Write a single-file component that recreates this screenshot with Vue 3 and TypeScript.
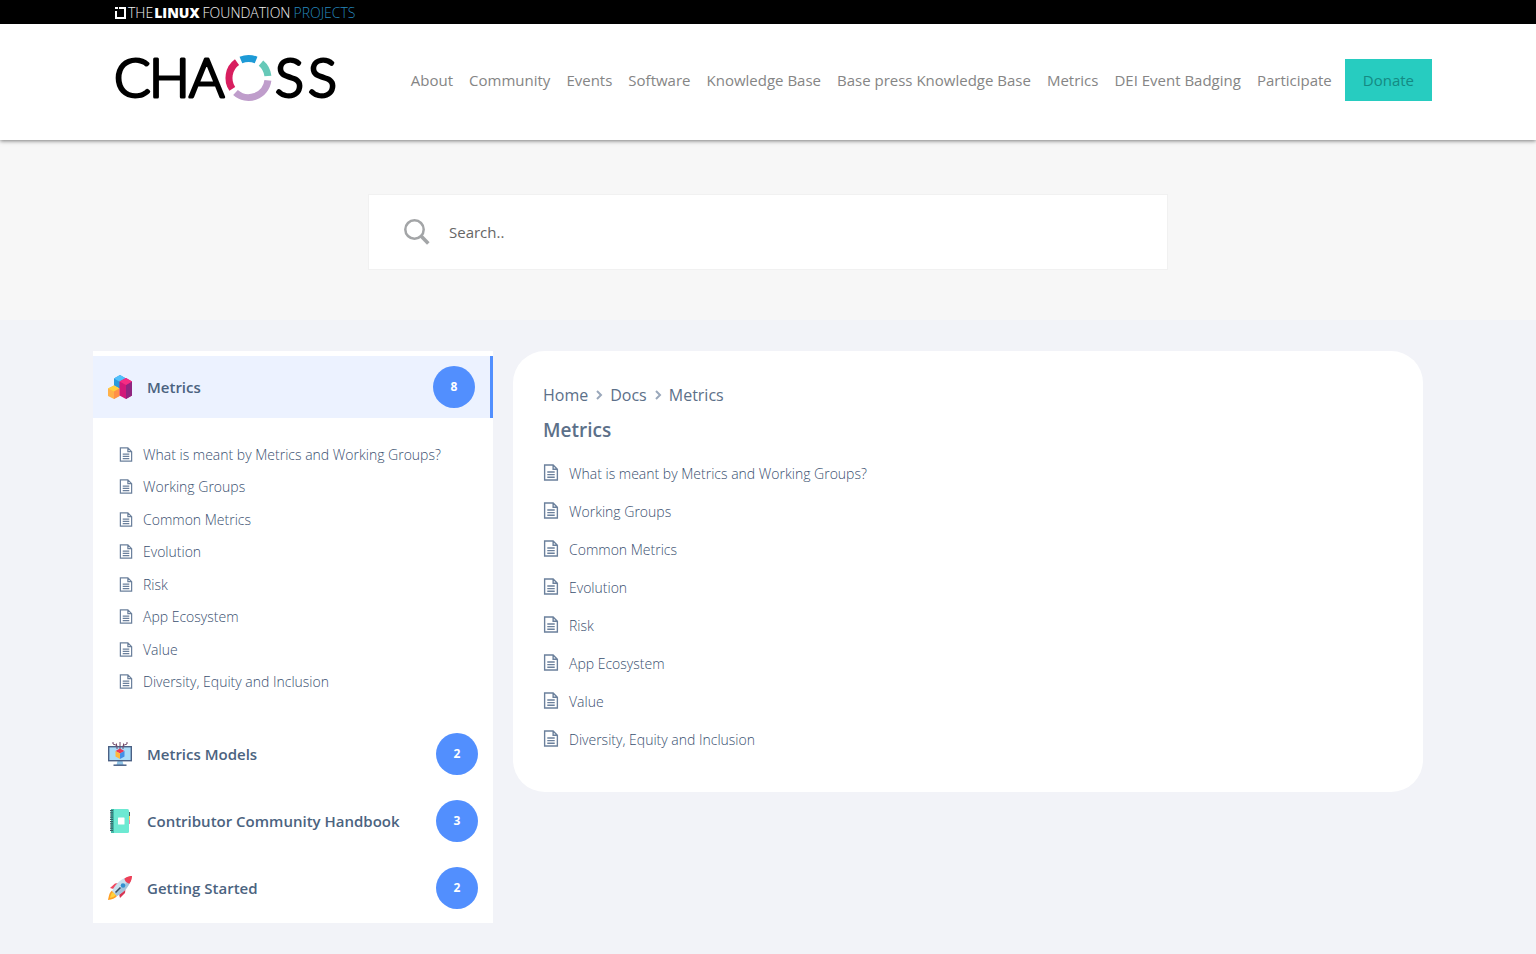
<script setup lang="ts">
interface NavItem { label: string; href: string }
interface Category { title: string; icon: 'blocks' | 'monitor' | 'notebook' | 'rocket'; count: number; open: boolean }

const nav: NavItem[] = [
  'About', 'Community', 'Events', 'Software', 'Knowledge Base',
  'Base press Knowledge Base', 'Metrics', 'DEI Event Badging', 'Participate',
].map((label) => ({ label, href: '#' + label.toLowerCase().replace(/ /g, '-') }))

const docs: string[] = [
  'What is meant by Metrics and Working Groups?', 'Working Groups', 'Common Metrics',
  'Evolution', 'Risk', 'App Ecosystem', 'Value', 'Diversity, Equity and Inclusion',
]

const categories: Category[] = [
  { title: 'Metrics', icon: 'blocks', count: 8, open: true },
  { title: 'Metrics Models', icon: 'monitor', count: 2, open: false },
  { title: 'Contributor Community Handbook', icon: 'notebook', count: 3, open: false },
  { title: 'Getting Started', icon: 'rocket', count: 2, open: false },
]
</script>

<template>
  <div class="page">
    <div class="topbar">
      <a class="lf" href="#linux-foundation">
        <svg class="lf-mark" viewBox="0 0 11 12" aria-hidden="true">
          <path d="M1 4V11H10V1H4" fill="none" stroke="#fff" stroke-width="2" />
          <path d="M0 0h3v2H0z" fill="#fff" />
        </svg>
        <span>THE<b>LINUX</b>FOUNDATION<em>PROJECTS</em></span>
      </a>
    </div>

    <header class="header">
      <a class="brand" href="#home" aria-label="CHAOSS home">
        <svg viewBox="-6 -14 232 76" role="img" aria-label="CHAOSS">
          <g class="brand-letters">
            <text x="-1" y="44">C</text>
            <text x="34" y="44">H</text>
            <text x="74" y="44">A</text>
            <text x="160" y="44">S</text>
            <text x="193" y="44">S</text>
          </g>
          <g fill="none" stroke-width="7">
            <path d="M125.900 7A19.500 19.500 0 0 1 141.100 7" stroke="#1d9ad6" />
            <path d="M146 10.100A19.500 19.500 0 0 1 152.900 23" stroke="#66c9b8" />
            <path d="M152.900 27.400A19.500 19.500 0 0 1 120.500 39.500" stroke="#bf9dcb" />
            <path d="M117.300 35.900A19.500 19.500 0 0 1 122 9.200" stroke="#d81e5f" />
          </g>
        </svg>
      </a>
      <div class="header-right">
        <nav class="nav" aria-label="Main">
          <a v-for="item in nav" :key="item.label" :href="item.href">{{ item.label }}</a>
        </nav>
        <a class="donate" href="#donate">Donate</a>
      </div>
    </header>

    <section class="search-band">
      <form class="search" role="search" @submit.prevent>
        <svg class="search-icon" viewBox="0 0 26 26" aria-hidden="true">
          <circle cx="10.500" cy="10.500" r="9.200" fill="none" stroke="#a3a5a7" stroke-width="2.500" />
          <path d="M17.300 17.300L24.300 24.500" stroke="#a3a5a7" stroke-width="3.600" />
        </svg>
        <input type="search" aria-label="Search" placeholder="Search.." />
      </form>
    </section>

    <div class="content">
      <aside class="sidebar">
        <section v-for="cat in categories" :key="cat.title">
          <button type="button" class="cat" :class="{ open: cat.open }" :aria-expanded="cat.open">
            <svg v-if="cat.icon === 'blocks'" class="cat-icon" viewBox="0 0 24 24" aria-hidden="true">
              <path d="M6 3.500L12 0l6 3.500v7L12 14l-6-3.500z" fill="#2a9bdc" />
              <path d="M6 3.500L12 0l6 3.500L12 7z" fill="#52c0fb" />
              <path d="M0 13.500L6 10.500l5.500 3V21L6 24l-6-3z" fill="#ffb14a" />
              <path d="M0 13.500L6 10.500l5.500 3L6 16.500z" fill="#ffd13d" />
              <path d="M6 16.500l5.500-3V21L6 24z" fill="#ff9148" />
              <path d="M11.500 6.500L18 3l6 3.500V20.500L18 24l-6.500-3.500z" fill="#d21879" />
              <path d="M18 10l6-3.500v14L18 24z" fill="#8f2580" />
              <path d="M11.500 6.500L18 3l6 3.500L18 10z" fill="#f52c83" />
            </svg>
            <svg v-else-if="cat.icon === 'monitor'" class="cat-icon" viewBox="0 0 24 24" aria-hidden="true">
              <path d="M9.500 19h5l1 4h-7z" fill="#8fc3e6" />
              <path d="M5.500 23.200h13" stroke="#4a6287" stroke-width="1.500" />
              <rect x=".7" y="4.700" width="22.600" height="14" fill="#a9dcf8" stroke="#4b6084" stroke-width="1.400" />
              <path d="M12 8V0M9 7V3.500L5 2V0M15 7V3.500L19 2V0M8.500 1.500v3M15.500 1.500v3" fill="none" stroke="#70496a" stroke-width="1" />
              <path d="M7.500 9L12 6.500 16.500 9 12 11.500z" fill="#ec3655" />
              <path d="M7.500 9l4.500 2.500V17l-4.500-2.500z" fill="#ffb83c" />
              <path d="M16.500 9L12 11.500V17l4.500-2.500z" fill="#428ee8" />
            </svg>
            <svg v-else-if="cat.icon === 'notebook'" class="cat-icon" viewBox="0 0 24 24" aria-hidden="true">
              <path d="M19 3h3v4h-3z" fill="#53635e" />
              <path d="M19 7h3v4h-3z" fill="#ffd45b" />
              <path d="M19 11h3v4h-3z" fill="#f38bb8" />
              <rect x="3" y="0" width="18" height="24" rx="1.500" fill="#6de9d2" />
              <path d="M3 0h3v24H3z" fill="#42b9a8" />
              <path d="M3.500 1v22" stroke="#375f64" stroke-width="3" stroke-dasharray="1.200 1" />
              <rect x="10" y="8.500" width="6.500" height="7" rx=".5" fill="#fff" />
            </svg>
            <svg v-else class="cat-icon" viewBox="0 0 24 24" aria-hidden="true">
              <path d="M2 12L7 7.500l4-.5-5.500 6z" fill="#ef4961" />
              <path d="M12 22l5-5 .5-4.500L11 18z" fill="#d83553" />
              <path d="M4 14.500C1 17 1 20 0 24c4-.5 7-1.500 9.500-4.500z" fill="#ff9f22" />
              <path d="M5 16c-2 1.500-2.500 3.500-3 6 2.500-.5 4.500-1.500 6-3z" fill="#ffd23e" />
              <path d="M4 15C8 7 14 1.500 22 1l1 1C22.500 9 17 15.500 9 20z" fill="#c9e0ee" />
              <path d="M6.500 17.500C12 13 18 7 23 2c-.5 7-6 13.500-14 18z" fill="#a3c5dc" />
              <path d="M16.500 2.500C19 .5 22 0 24 0c0 2-.5 5-2.500 7.500C19 7.500 16.500 5 16.500 2.500z" fill="#ed4058" />
              <circle cx="15" cy="9.500" r="2.300" fill="#338fcf" />
              <path d="M7.500 16.500l5-5" stroke="#374b61" stroke-width="1.600" />
            </svg>
            <span class="cat-title">{{ cat.title }}</span>
            <span class="count">{{ cat.count }}</span>
          </button>
          <ul v-if="cat.open" class="side-list">
            <li v-for="doc in docs" :key="doc">
              <a href="#doc">
                <svg class="doc-icon" viewBox="0 0 14 16" aria-hidden="true">
                  <path d="M1 1h8l4 4v10H1zM9 1v4h4M3.500 7.500h7M3.500 10h7M3.500 12.500h7" />
                </svg>
                {{ doc }}
              </a>
            </li>
          </ul>
        </section>
      </aside>

      <main class="panel">
        <nav class="crumbs" aria-label="Breadcrumb">
          <a href="#home">Home</a>
          <svg viewBox="0 0 8 10" aria-hidden="true"><path d="M2 1l4 4-4 4" /></svg>
          <a href="#docs">Docs</a>
          <svg viewBox="0 0 8 10" aria-hidden="true"><path d="M2 1l4 4-4 4" /></svg>
          <span>Metrics</span>
        </nav>
        <h1>Metrics</h1>
        <ul class="main-list">
          <li v-for="doc in docs" :key="doc">
            <a href="#doc">
              <svg class="doc-icon" viewBox="0 0 14 16" aria-hidden="true">
                <path d="M1 1h8l4 4v10H1zM9 1v4h4M3.500 7.500h7M3.500 10h7M3.500 12.500h7" />
              </svg>
              {{ doc }}
            </a>
          </li>
        </ul>
      </main>
    </div>
  </div>
</template>

<style>
body {
  background: #f2f3f8;
}
</style>

<style scoped>
.page {
  font-family: 'Open Sans', 'Noto Sans', sans-serif;
  color: #5c7089;
}
.page * {
  box-sizing: border-box;
}
a {
  color: inherit;
  text-decoration: none;
}
ul {
  list-style: none;
  margin: 0;
  padding: 0;
}
.topbar {
  height: 24px;
  background: #000;
  padding: 0 115px;
}
.lf {
  display: inline-flex;
  align-items: center;
  gap: 2px;
  height: 26px;
  color: #f0f0f0;
  font-size: 14px;
  font-weight: 300;
  line-height: 26px;
}
.lf b {
  margin: 0 3px 0 1px;
  color: #fff;
  font-weight: 800;
}
.lf em {
  margin-left: 3px;
  font-style: normal;
  color: #2587bd;
}
.lf-mark {
  width: 11px;
  height: 12px;
}
.header {
  position: relative;
  display: flex;
  align-items: center;
  justify-content: space-between;
  height: 116px;
  padding: 0 104px 4px 109px;
  background: #fff;
  box-shadow: 0 1px 4px rgba(0, 0, 0, 0.5);
}
.brand {
  padding-bottom: 6px;
}
.brand svg {
  display: block;
  width: 232px;
  height: 76px;
}
.brand-letters {
  font-family: Lato, sans-serif;
  font-size: 54px;
  font-weight: 300;
  fill: #000;
  stroke: #000;
  stroke-width: 3;
  stroke-linejoin: round;
}
.header-right {
  display: flex;
  align-items: center;
  gap: 13px;
}
.nav {
  display: flex;
  gap: 16px;
  font-size: 15px;
  color: #858585;
  white-space: nowrap;
}
.donate {
  padding: 0 18px;
  font-size: 15px;
  line-height: 42px;
  color: #148a83;
  background: #27ccc0;
}
.search-band {
  padding: 54px 24px 50px;
  background: #f7f7f7;
}
.search {
  display: flex;
  align-items: center;
  gap: 19px;
  max-width: 800px;
  height: 76px;
  margin: 0 auto;
  padding: 0 35px;
  background: #fff;
  border: 1px solid #f1f1f1;
}
.search-icon {
  flex: none;
  width: 26px;
  height: 26px;
}
.search input {
  flex: 1;
  min-width: 0;
  height: 40px;
  padding: 0;
  border: 0;
  outline: 0;
  font: 400 15px 'Open Sans', sans-serif;
  color: #555;
}
.search input::placeholder {
  color: #666;
  opacity: 1;
}
.content {
  display: flex;
  align-items: flex-start;
  gap: 20px;
  padding: 31px 113px 31px 93px;
}
.sidebar {
  flex: 0 0 400px;
  padding: 5px 0 2px;
  background: #fff;
}
.cat {
  display: flex;
  align-items: center;
  width: 100%;
  height: 67px;
  padding: 0 15px;
  border: 0;
  background: none;
  font: 600 15px 'Open Sans', sans-serif;
  color: #4b6380;
  text-align: left;
}
.cat.open {
  height: 62px;
  background: #ecf2ff;
  border-right: 3px solid #528ffe;
}
.cat-icon {
  flex: none;
  width: 24px;
  height: 24px;
  margin-right: 15px;
}
.cat-title {
  flex: 1;
}
.count {
  width: 42px;
  height: 42px;
  border-radius: 50%;
  background: #528ffe;
  color: #fff;
  font-size: 12px;
  font-weight: 700;
  line-height: 42px;
  text-align: center;
}
.side-list {
  display: grid;
  grid-auto-rows: 1fr;
  min-height: 302px;
  padding: 20px 26px 22px;
}
.side-list a,
.main-list a {
  display: flex;
  align-items: center;
  height: 100%;
  font-size: 14px;
  font-weight: 300;
  color: #3a5070;
}
.doc-icon {
  flex: none;
  fill: none;
  stroke: #6b809c;
  stroke-width: 1.3;
}
.side-list .doc-icon {
  width: 14px;
  height: 15px;
  margin-right: 10px;
}
.main-list .doc-icon {
  width: 16px;
  height: 17px;
  margin: 0 10px 2px 0;
}
.panel {
  flex: 1;
  min-width: 0;
  padding: 29px 30px 34px;
  background: #fff;
  border-radius: 32px;
}
.crumbs {
  display: flex;
  align-items: center;
  gap: 7px;
  height: 30px;
  font-size: 16px;
}
.crumbs svg {
  width: 8px;
  height: 10px;
  fill: none;
  stroke: #9aa8bb;
  stroke-width: 2;
}
h1 {
  margin: 5px 0 9px;
  font-size: 19px;
  font-weight: 600;
  line-height: 30px;
}
.main-list li {
  height: 38px;
}
</style>
